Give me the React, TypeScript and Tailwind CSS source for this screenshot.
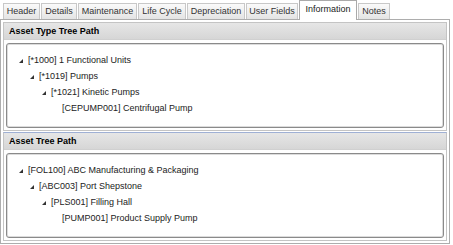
import React from 'react'

type Node = { label: string; level: number; open: boolean }

const tabs = [
  { name: 'Header', w: 'w-[37px]' },
  { name: 'Details', w: 'w-[36px]' },
  { name: 'Maintenance', w: 'w-[59px]' },
  { name: 'Life Cycle', w: 'w-[48px]' },
  { name: 'Depreciation', w: 'w-[58px]' },
  { name: 'User Fields', w: 'w-[52px]' },
  { name: 'Information', w: 'w-[58px]', active: true },
  { name: 'Notes', w: 'w-[32px]' },
]

const indent = ['pl-[12px]', 'pl-[23px]', 'pl-[35px]', 'pl-[46px]']

const assetType: Node[] = [
  { label: '[*1000] 1 Functional Units', level: 0, open: true },
  { label: '[*1019] Pumps', level: 1, open: true },
  { label: '[*1021] Kinetic Pumps', level: 2, open: true },
  { label: '[CEPUMP001] Centrifugal Pump', level: 3, open: false },
]

const assetTree: Node[] = [
  { label: '[FOL100] ABC Manufacturing & Packaging', level: 0, open: true },
  { label: '[ABC003] Port Shepstone', level: 1, open: true },
  { label: '[PLS001] Filling Hall', level: 2, open: true },
  { label: '[PUMP001] Product Supply Pump', level: 3, open: false },
]

function Triangle() {
  return (
    <svg width="4" height="4" viewBox="0 0 4 4" className="block">
      <polygon points="4,0 4,4 0,4" fill="#333" />
    </svg>
  )
}

function Section({ title, nodes, highlight }: { title: string; nodes: Node[]; highlight?: boolean }) {
  return (
    <div
      className={
        'border border-[#c4c4c4] ' + (highlight ? 'border-t-[#9fb0d4]' : '')
      }
    >
      <div className="flex h-[17px] items-center border-b border-[#d0d0d0] bg-gradient-to-b from-[#e6e6e6] to-[#d6d6d6] pl-[5px] font-bold text-black">
        {title}
      </div>
      <div className="px-[2px] pt-[3px] pb-[2px]">
        <div className="h-[85px] rounded-[3px] border border-[#8a8a8a] pt-[8px] shadow-[inset_0_0_0_1px_#dcdcdc]">
          {nodes.map((n) => (
            <div key={n.label} className={'flex h-[16px] items-center ' + indent[n.level]}>
              <span className="flex w-[9px] items-center pt-px">{n.open && <Triangle />}</span>
              <span className="text-[#222]">{n.label}</span>
            </div>
          ))}
        </div>
      </div>
    </div>
  )
}

export default function App() {
  return (
    <div className="h-[245px] w-[453px] bg-white font-['Liberation_Sans',Arial,sans-serif] text-[9px] leading-none">
      <div className="flex h-[19px] items-end gap-px pl-[3px]">
        {tabs.map((t) =>
          t.active ? (
            <div
              key={t.name}
              className={`${t.w} relative z-10 -mb-px flex h-[20px] justify-center border border-b-0 border-[#aaaaaa] bg-white pt-[4px] text-[#222]`}
            >
              {t.name}
            </div>
          ) : (
            <div
              key={t.name}
              className={`${t.w} flex h-[16px] items-center justify-center border border-b-0 border-[#c8c8c8] bg-gradient-to-b from-[#fafafa] to-[#e4e4e4] text-[#333]`}
            >
              {t.name}
            </div>
          ),
        )}
      </div>
      <div className="flex w-[450px] flex-col gap-px border border-[#adadad] p-[2px]">
        <Section title="Asset Type Tree Path" nodes={assetType} />
        <Section title="Asset Tree Path" nodes={assetTree} highlight />
      </div>
    </div>
  )
}
